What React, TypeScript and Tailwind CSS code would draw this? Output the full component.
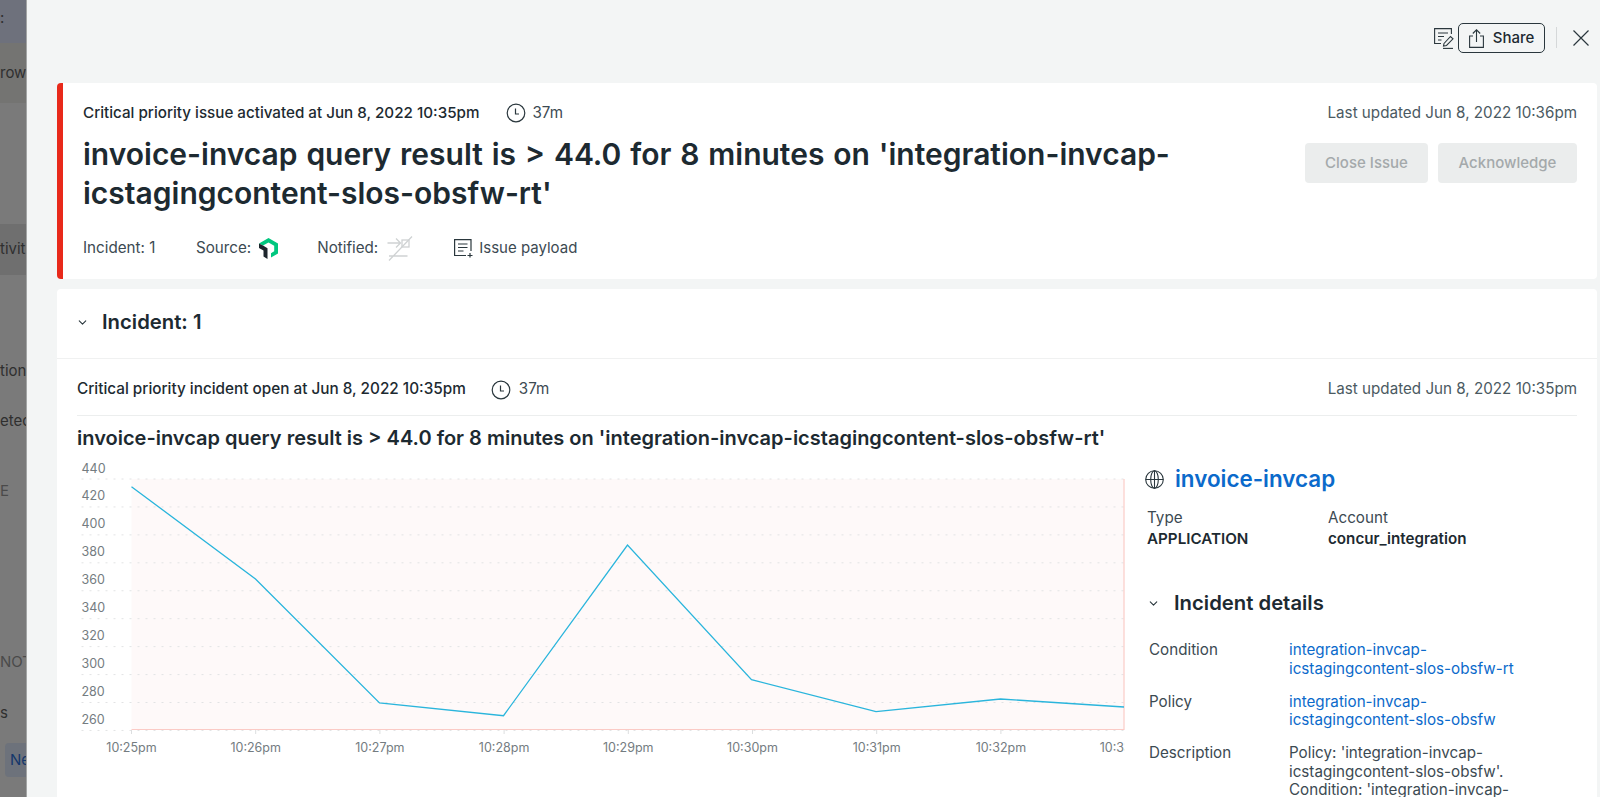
import { ChevronDown } from 'lucide-react';

const gridValues = [440, 420, 400, 380, 360, 340, 320, 300, 280, 260];
const timeTicks = ['10:25pm', '10:26pm', '10:27pm', '10:28pm', '10:29pm', '10:30pm', '10:31pm', '10:32pm', '10:33pm'];
const linePoints = '132,486.7 256,579 380,703 504,715.7 628,545 752,679.7 876.5,711.7 1001,699 1124.5,707';

function ClockIcon() {
  return (
    <svg width="20" height="20" viewBox="0 0 20 20" fill="none" stroke="#2a373d" strokeWidth="1.2">
      <circle cx="10" cy="10" r="8.8" />
      <path d="M9.5 5.5v5.5h3.5" />
    </svg>
  );
}

function NewRelicLogo() {
  return (
    <svg width="19" height="21" viewBox="0 0 19 21">
      <path d="M9.5 0 19 5.5v10L12 19.6v-4.4l3.2-1.9V7.7L9.5 4.4 4 7.6 0 5.5z" fill="#00c77f" />
      <path d="M0 5.5 4 7.6 8.5 10.2V21L4.5 18.6v-6L0 10z" fill="#1d252c" />
    </svg>
  );
}

function NotifiedOffIcon() {
  return (
    <svg width="26" height="25" viewBox="0 0 26 25" fill="none" stroke="#cfd2d3" strokeWidth="1.3">
      <path d="M0.5 7h13M9 2.5 13.5 7 9 11.500" />
      <rect x="15" y="4" width="7" height="7" />
      <path d="M2 20h18.500M2 24.500 25 0.500" />
    </svg>
  );
}

function PayloadIcon() {
  return (
    <svg width="20" height="19" viewBox="0 0 20 19" fill="none" stroke="#2a373d" strokeWidth="1.2">
      <path d="M12 16.500H0.600V0.600H17V12" />
      <path d="M4 5h9.500M4 8.500h9.500M4 12h5.500M13.500 16.500h5M16 14v4.500" />
    </svg>
  );
}

function NoteEditIcon() {
  return (
    <svg width="20" height="21" viewBox="0 0 20 21" fill="none" stroke="#2a373d" strokeWidth="1.1">
      <path d="M7 15.500H0.600V0.600H17.400V6" />
      <path d="M4 5h10M4 8.500h6M4 12h3.500" />
      <path d="M10 15.500 16.500 8.500l2.500 2.300-6.500 6.700-3 .5z" />
      <path d="M9 20.400h10" />
    </svg>
  );
}

function ShareIcon() {
  return (
    <svg width="15" height="19" viewBox="0 0 15 19" fill="none" stroke="#2a373d" strokeWidth="1.1">
      <path d="M4 7H0.600v11.400h13.800V7H11" />
      <path d="M7.500 13V0.800M3.800 4.500 7.500 0.800l3.700 3.700" />
    </svg>
  );
}

function CloseIcon() {
  return (
    <svg width="16" height="16" viewBox="0 0 16 16" fill="none" stroke="#2a373d" strokeWidth="1.2">
      <path d="M0.500 0.500l15 15M15.500 0.500l-15 15" />
    </svg>
  );
}

function GlobeIcon() {
  return (
    <svg width="19" height="19" viewBox="0 0 19 19" fill="none" stroke="#2a373d" strokeWidth="1.1">
      <circle cx="9.500" cy="9.500" r="8.800" />
      <ellipse cx="9.500" cy="9.500" rx="3.800" ry="8.800" />
      <path d="M0.700 9.500h17.600M9.500 0.700v17.600" />
    </svg>
  );
}

function SideStrip() {
  return (
    <div className="w-[27px] shrink-0 flex flex-col overflow-hidden bg-[#7a7a7a] border-r border-[#a3a5a5] text-[15px] text-[#2f2f2f] whitespace-nowrap">
      <div className="h-[43px] shrink-0 bg-[#6e717c] pt-2 leading-5">:</div>
      <div className="h-[60px] shrink-0 bg-[#747472] flex items-center">row</div>
      <div className="h-[121px] shrink-0" />
      <div className="h-[51px] shrink-0 bg-[#6f6f6f] flex items-center">tivit</div>
      <div className="h-[81px] shrink-0" />
      <div className="h-[30px] shrink-0 flex items-center">tion</div>
      <div className="h-[20px] shrink-0" />
      <div className="h-[30px] shrink-0 flex items-center">etec</div>
      <div className="h-[40px] shrink-0" />
      <div className="h-[30px] shrink-0 flex items-center text-[#4a4a4a]">E</div>
      <div className="h-[141px] shrink-0" />
      <div className="h-[30px] shrink-0 flex items-center text-[#4a4a4a]">NOT</div>
      <div className="h-[21px] shrink-0" />
      <div className="h-[30px] shrink-0 flex items-center">s</div>
      <div className="h-[15px] shrink-0" />
      <div className="h-[34px] shrink-0 ml-[5px] pl-[5px] flex items-center bg-[#6d727b] rounded-l text-[#14376b]">Ne</div>
    </div>
  );
}

function IncidentChart() {
  return (
    <svg width="1060" height="320" viewBox="77.500 460 1060 320" className="block" style={{ fontFamily: 'Inter, sans-serif' }}>
      <defs>
        <clipPath id="plot-clip">
          <rect x="77" y="460" width="1048" height="320" />
        </clipPath>
      </defs>
      <rect x="132" y="479" width="992" height="250" fill="#fef9f9" />
      {gridValues.map((value, i) => (
        <g key={value}>
          <line x1="82" x2="1124" y1={479 + i * 27.94} y2={479 + i * 27.94} stroke="#e2e3e4" strokeDasharray="2 6" />
          <text x="82" y={472.500 + i * 27.94} fontSize="12.500" fill="#747c81">
            {value}
          </text>
        </g>
      ))}
      <path d="M132 729.500H1124.500V479" fill="none" stroke="#fbcbc6" strokeWidth="1.200" />
      <g clipPath="url(#plot-clip)">
        {timeTicks.map((label, i) => (
          <g key={label}>
            <line x1={132 + i * 124.2} x2={132 + i * 124.2} y1="730" y2="734" stroke="#dcdedf" />
            <text x={132 + i * 124.2} y="751.500" fontSize="12.500" fill="#747c81" textAnchor="middle">
              {label}
            </text>
          </g>
        ))}
      </g>
      <polyline points={linePoints} fill="none" stroke="#2ab5dc" strokeWidth="1.300" />
    </svg>
  );
}

export default function App() {
  return (
    <div
      className="flex h-[797px] w-[1600px] overflow-hidden bg-[#f3f5f5] text-[15.2px] text-[#1d2a31]"
      style={{ fontFamily: 'Inter, sans-serif' }}
    >
      <SideStrip />

      <div className="flex-1 pl-[30px] pr-[3px] flex flex-col min-w-0">
        <div className="h-[83px] shrink-0 flex justify-end items-start pt-[23px] pr-[8px]">
          <div className="mt-[5px] mr-[4px]">
            <NoteEditIcon />
          </div>
          <button className="h-[30px] w-[87px] border border-[#2a373d] rounded-[5px] flex items-center justify-center gap-[9px] font-medium text-[15px]">
            <ShareIcon />
            Share
          </button>
          <div className="w-px h-[21px] bg-[#d5d8d9] mt-[4px] ml-[11px] mr-[16px]" />
          <div className="mt-[7px]">
            <CloseIcon />
          </div>
        </div>

        <div className="h-[196px] shrink-0 bg-white rounded border-l-[6px] border-[#e8291a] pl-[20px] pr-[20px] flex justify-between">
          <div className="flex-1 min-w-0 pt-[20px]">
            <div className="flex items-center h-5">
              <span className="font-medium">Critical priority issue activated at Jun 8, 2022 10:35pm</span>
              <span className="ml-[27px]">
                <ClockIcon />
              </span>
              <span className="ml-[6px] text-[#3c4a52]">37m</span>
            </div>
            <h1 className="mt-[12px] text-[30px] leading-[39px] font-semibold pr-[20px] [word-spacing:1.3px]">
              invoice-invcap query result is &gt; 44.0 for 8 minutes on 'integration-invcap-icstagingcontent-slos-obsfw-rt'
            </h1>
            <div className="mt-[23px] flex items-center h-[25px] text-[#3c4a52]">
              <span className="w-[113px]">Incident: 1</span>
              <span>Source:</span>
              <span className="ml-[8px] w-[58px]">
                <NewRelicLogo />
              </span>
              <span>Notified:</span>
              <span className="ml-[9px] w-[67px]">
                <NotifiedOffIcon />
              </span>
              <PayloadIcon />
              <span className="ml-[5px] text-[15px]">Issue payload</span>
            </div>
          </div>
          <div className="w-[272px] shrink-0 pt-[20px] flex flex-col items-end">
            <div className="h-5 leading-5 whitespace-nowrap text-[#4b5a62]">Last updated Jun 8, 2022 10:36pm</div>
            <div className="mt-[20px] flex gap-[10px]">
              <button className="w-[123px] h-10 pt-px rounded bg-[#ebeded] text-[#a4a9ab] font-medium text-[15px]">Close Issue</button>
              <button className="w-[139px] h-10 pt-px rounded bg-[#ebeded] text-[#a4a9ab] font-medium text-[15px]">Acknowledge</button>
            </div>
          </div>
        </div>

        <div className="mt-[10px] flex-1 bg-white rounded-t overflow-hidden">
          <div className="h-[70px] border-b border-[#f0f1f1] flex items-center pl-[20px] pb-[2px]">
            <ChevronDown size={13} strokeWidth={2} color="#2a373d" className="ml-[-1px]" />
            <span className="ml-[13px] text-[20.300px] font-semibold">Incident: 1</span>
          </div>
          <div className="px-[20px]">
            <div className="h-[57px] pt-[5px] flex items-center border-b border-[#eceeee]">
              <span className="font-medium text-[15.300px]">Critical priority incident open at Jun 8, 2022 10:35pm</span>
              <span className="ml-[25px]">
                <ClockIcon />
              </span>
              <span className="ml-[8px] text-[#3c4a52]">37m</span>
              <span className="ml-auto text-[#4b5a62]">Last updated Jun 8, 2022 10:35pm</span>
            </div>
            <h2 className="mt-[9px] text-[20px] leading-[26px] font-semibold">
              invoice-invcap query result is &gt; 44.0 for 8 minutes on 'integration-invcap-icstagingcontent-slos-obsfw-rt'
            </h2>
            <div className="mt-[9px] flex">
              <IncidentChart />
              <div className="ml-[9px] flex-1 min-w-0">
                <div className="flex items-center h-[30px] mt-[4px]">
                  <span className="ml-[-1px]">
                    <GlobeIcon />
                  </span>
                  <span className="ml-[11px] text-[22.400px] font-semibold text-[#0b6acb]">invoice-invcap</span>
                </div>
                <div className="mt-[13px] flex pl-[1px] leading-[21px]">
                  <div className="w-[181px]">
                    <div className="text-[#3c4a52]">Type</div>
                    <div className="font-semibold">APPLICATION</div>
                  </div>
                  <div>
                    <div className="text-[#3c4a52]">Account</div>
                    <div className="font-semibold">concur_integration</div>
                  </div>
                </div>
                <div className="mt-[40px] flex items-center h-[28px]">
                  <ChevronDown size={13} strokeWidth={2} color="#2a373d" className="ml-[1px]" />
                  <span className="ml-[14px] text-[20.300px] font-semibold">Incident details</span>
                </div>
                <div className="mt-[24px] pl-[3px] leading-[18.500px] grid grid-cols-[140px_1fr] gap-y-[14.500px] text-[#3c4a52]">
                  <div>Condition</div>
                  <div className="text-[#0b6acb]">
                    integration-invcap-
                    <br />
                    icstagingcontent-slos-obsfw-rt
                  </div>
                  <div>Policy</div>
                  <div className="text-[#0b6acb]">
                    integration-invcap-
                    <br />
                    icstagingcontent-slos-obsfw
                  </div>
                  <div>Description</div>
                  <div>
                    Policy: 'integration-invcap-
                    <br />
                    icstagingcontent-slos-obsfw'.
                    <br />
                    Condition: 'integration-invcap-
                  </div>
                </div>
              </div>
            </div>
          </div>
        </div>
      </div>
    </div>
  );
}
